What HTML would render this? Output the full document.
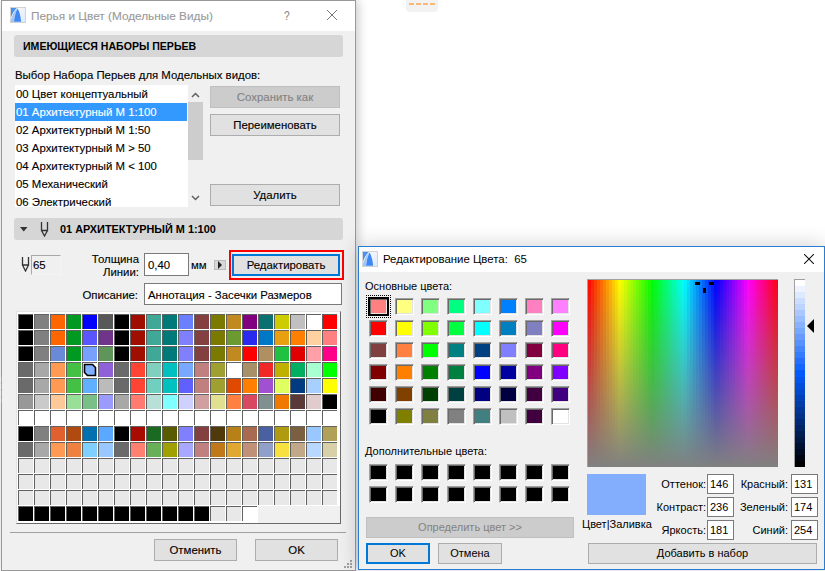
<!DOCTYPE html>
<html><head><meta charset="utf-8">
<style>
*{margin:0;padding:0;box-sizing:border-box}
html,body{width:825px;height:571px;overflow:hidden;background:#fff;position:relative;font-family:"Liberation Sans",sans-serif;font-size:11.4px;color:#000}
.a{position:absolute;white-space:nowrap}
.t{position:absolute;white-space:nowrap;line-height:14px}
#d1{position:absolute;left:0;top:0;width:357px;height:580px;-webkit-text-stroke:0.12px currentColor}
#d1bg{position:absolute;left:1px;top:0;width:355px;height:571px;background:#f0f0f0;border:1px solid #999;box-shadow:2px 0 10px rgba(0,0,0,0.22)}
#d1 .title{position:absolute;left:2px;top:1px;width:353px;height:30px;background:#fff}
.hdr{position:absolute;background:#d6d6d6;border-radius:3px}
.btn{position:absolute;background:#e1e1e1;border:1px solid #adadad;text-align:center}
.btn.dis{background:#cccccc;border-color:#bfbfbf;color:#838383}
.edit{position:absolute;background:#fff;border:1px solid #7a7a7a}
#pg i{position:absolute;width:15px;height:15px;border-top:1px solid #626262;border-left:1px solid #626262}
#pg i.nb{border:none;width:16px;height:16px}
#d2{position:absolute;left:358px;top:246px;width:467px;height:324px;background:#f0f0f0;border:1px solid #2b7cd3;box-shadow:0 0 20px rgba(0,0,0,0.2);font-size:11px}
#d2 .title{position:absolute;left:0;top:0;width:465px;height:25px;background:#fff}
#sw b{position:absolute;width:19px;height:17px;border:1px solid;border-color:#a0a0a0 #fff #fff #a0a0a0;box-shadow:inset 1px 1px 0 #696969, inset -1px -1px 0 #e3e3e3}
.btn2{position:absolute;background:#e1e1e1;border:1px solid #adadad;text-align:center;font-size:11px}
.edit2{position:absolute;background:#fff;border:1px solid #7a7a7a;font-size:11px}
</style></head><body>

<!-- top decoration -->
<div class="a" style="left:406px;top:-4px;width:32px;height:16px;background:#f2f2f2;border-radius:4px"></div>
<div class="a" style="left:409px;top:3px;width:26px;height:2px;background:repeating-linear-gradient(90deg,#f9b878 0 5px,transparent 5px 7px)"></div>

<div id="d1">
  <div id="d1bg"></div>
  <div class="a" style="left:1px;top:377px;width:1px;height:26px;background:repeating-linear-gradient(180deg,#c9a47c 0 5px,transparent 5px 7px)"></div>
  <div class="title"></div>
  <!-- icon -->
  <svg class="a" style="left:10px;top:7px" width="16" height="16" viewBox="0 0 16 16">
    <defs><linearGradient id="ig1" x1="0" y1="0" x2="1" y2="1"><stop offset="0" stop-color="#ffffff"/><stop offset="1" stop-color="#dde8f8"/></linearGradient></defs>
    <rect x="0.5" y="0.5" width="15" height="15" fill="url(#ig1)" stroke="#d2d2d2"/>
    <path d="M1 1 H7 Q3 5 1 11 Z" fill="#4b8ff2"/>
    <path d="M1 15 L1 12 Q3 5 7.2 1.2 Q4.5 7 4 15 Z" fill="#a3c6f7"/>
    <path d="M4 14.8 Q5 6 7.5 1.5 Q10 5 11.2 14.8 Z" fill="#3e88f6"/>
    <path d="M1 11.5 Q3 5 7 1" stroke="#fff" stroke-width="0.9" stroke-dasharray="1.2 0.8" fill="none"/>
  </svg>
  <div class="t" style="left:31px;top:9px;color:#9a9a9a;font-size:11.8px">Перья и Цвет (Модельные Виды)</div>
  <div class="t" style="left:284px;top:9px;color:#8a8a8a;font-size:12px;transform:scaleX(0.85);transform-origin:left">?</div>
  <svg class="a" style="left:326px;top:9px" width="12" height="12" viewBox="0 0 12 12"><path d="M1 1 L11 11 M11 1 L1 11" stroke="#777" stroke-width="1"/></svg>

  <div class="hdr" style="left:14px;top:35px;width:329px;height:22px"></div>
  <div class="t" style="left:23px;top:39px;font-weight:bold;font-size:11px;-webkit-text-stroke:0;transform:scaleX(0.96);transform-origin:left">ИМЕЮЩИЕСЯ НАБОРЫ ПЕРЬЕВ</div>

  <div class="t" style="left:15px;top:68px">Выбор Набора Перьев для Модельных видов:</div>

  <!-- listbox -->
  <div class="a" style="left:15px;top:85px;width:188px;height:122px;background:#fff;overflow:hidden">
    <div class="a" style="left:0;top:18px;width:172px;height:18px;background:#3399ff"></div>
    <div class="t" style="left:1px;top:2px">00 Цвет концептуальный</div>
    <div class="t" style="left:1px;top:20px;color:#fff">01 Архитектурный М 1:100</div>
    <div class="t" style="left:1px;top:38px">02 Архитектурный М 1:50</div>
    <div class="t" style="left:1px;top:56px">03 Архитектурный М &gt; 50</div>
    <div class="t" style="left:1px;top:74px">04 Архитектурный М &lt; 100</div>
    <div class="t" style="left:1px;top:92px">05 Механический</div>
    <div class="t" style="left:1px;top:110px">06 Электрический</div>
    <div class="a" style="left:173px;top:0;width:15px;height:122px;background:#f0f0f0"></div>
    <div class="a" style="left:173px;top:17px;width:15px;height:58px;background:#cdcdcd"></div>
    <svg class="a" style="left:176px;top:7px" width="9" height="6" viewBox="0 0 9 6"><path d="M1 5 L4.5 1.5 L8 5" stroke="#606060" stroke-width="1.5" fill="none"/></svg>
    <svg class="a" style="left:176px;top:110px" width="9" height="6" viewBox="0 0 9 6"><path d="M1 1 L4.5 4.5 L8 1" stroke="#606060" stroke-width="1.5" fill="none"/></svg>
  </div>

  <div class="btn dis" style="left:210px;top:86px;width:130px;height:22px;line-height:20px">Сохранить как</div>
  <div class="btn" style="left:210px;top:114px;width:130px;height:22px;line-height:20px">Переименовать</div>
  <div class="btn" style="left:210px;top:184px;width:130px;height:22px;line-height:20px">Удалить</div>

  <div class="hdr" style="left:14px;top:218px;width:329px;height:22px"></div>
  <svg class="a" style="left:20px;top:227px" width="8" height="5" viewBox="0 0 8 5"><path d="M0 0 L7.5 0 L3.75 4.5 Z" fill="#333"/></svg>
  <svg class="a" style="left:40px;top:222px" width="9" height="15" viewBox="0 0 9 15"><path d="M1.5 0 V8.5 H7.5 V0 M1.5 8.5 L4.5 14 L7.5 8.5" stroke="#333" stroke-width="1.3" fill="none"/></svg>
  <div class="t" style="left:60px;top:222px;font-weight:bold;font-size:11px;-webkit-text-stroke:0;transform:scaleX(0.99);transform-origin:left">01 АРХИТЕКТУРНЫЙ М 1:100</div>

  <svg class="a" style="left:21px;top:257px" width="9" height="15" viewBox="0 0 9 15"><path d="M1.5 0 V8 H7.5 V0 M1.5 8 L4.5 14 L7.5 8" stroke="#333" stroke-width="1.3" fill="none"/></svg>
  <div class="a" style="left:31px;top:255px;width:30px;height:20px;border:1px solid;border-color:#a8a8a8 #f4f4f4 #f4f4f4 #a8a8a8;background:#f0f0f0"></div>
  <div class="t" style="left:33px;top:258px">65</div>

  <div class="t" style="left:80px;top:252px;text-align:right;width:59px">Толщина</div>
  <div class="t" style="left:80px;top:265px;text-align:right;width:59px">Линии:</div>
  <div class="edit" style="left:144px;top:253px;width:45px;height:23px"></div>
  <div class="t" style="left:148px;top:258px">0,40</div>
  <div class="t" style="left:191px;top:258px">мм</div>
  <div class="a" style="left:214px;top:260px;width:12px;height:10px;background:#d8d8d8;border:1px solid #bbb"></div>
  <svg class="a" style="left:217px;top:261px" width="6" height="8" viewBox="0 0 6 8"><path d="M1 0 L5 4 L1 8 Z" fill="#222"/></svg>

  <div class="a" style="left:229px;top:250px;width:115px;height:30px;border:2px solid #ff0000"></div>
  <div class="btn" style="left:232px;top:254px;width:108px;height:22px;line-height:18px;border:2px solid #0078d7">Редактировать</div>

  <div class="t" style="left:40px;top:288px;text-align:right;width:98px">Описание:</div>
  <div class="edit" style="left:144px;top:283px;width:198px;height:22px"></div>
  <div class="t" style="left:148px;top:288px">Аннотация - Засечки Размеров</div>

  <!-- pen grid box -->
  <div class="a" style="left:16px;top:311px;width:325px;height:213px;background:#f0f0f0;border-top:1px solid #e3e3e3;border-left:1px solid #e3e3e3;border-right:1px solid #696969;border-bottom:1px solid #696969"></div>
  <div class="a" style="left:17px;top:312px;width:323px;height:194px;background:#fff"></div>
  <div class="a" style="left:17px;top:312px;width:241px;height:211px;background:#fff"></div>
  <div id="pg" style="position:absolute;left:0;top:0">
<i style="left:18px;top:314px;background:#000000"></i>
<i style="left:34px;top:314px;background:#808080"></i>
<i style="left:50px;top:314px;background:#ff6600"></i>
<i style="left:66px;top:314px;background:#009922"></i>
<i style="left:82px;top:314px;background:#0000ff"></i>
<i style="left:98px;top:314px;background:#585858"></i>
<i style="left:114px;top:314px;background:#000000"></i>
<i style="left:130px;top:314px;background:#a00e00"></i>
<i style="left:146px;top:314px;background:#3fa896"></i>
<i style="left:162px;top:314px;background:#007a78"></i>
<i style="left:178px;top:314px;background:#6a80ff"></i>
<i style="left:194px;top:314px;background:#844040"></i>
<i style="left:210px;top:314px;background:#7a7a00"></i>
<i style="left:226px;top:314px;background:#c08a20"></i>
<i style="left:242px;top:314px;background:#800080"></i>
<i style="left:258px;top:314px;background:#0a7070"></i>
<i style="left:274px;top:314px;background:#cccc00"></i>
<i style="left:290px;top:314px;background:#c0c0c0"></i>
<i style="left:306px;top:314px;background:#ffffff"></i>
<i style="left:322px;top:314px;background:#ff0000"></i>
<i style="left:18px;top:330px;background:#000000"></i>
<i style="left:34px;top:330px;background:#808080"></i>
<i style="left:50px;top:330px;background:#ff6600"></i>
<i style="left:66px;top:330px;background:#009922"></i>
<i style="left:82px;top:330px;background:#5a55ff"></i>
<i style="left:98px;top:330px;background:#70358a"></i>
<i style="left:114px;top:330px;background:#000000"></i>
<i style="left:130px;top:330px;background:#a00e00"></i>
<i style="left:146px;top:330px;background:#3fa896"></i>
<i style="left:162px;top:330px;background:#007a78"></i>
<i style="left:178px;top:330px;background:#8080ff"></i>
<i style="left:194px;top:330px;background:#844040"></i>
<i style="left:210px;top:330px;background:#7a7a00"></i>
<i style="left:226px;top:330px;background:#6a9a30"></i>
<i style="left:242px;top:330px;background:#2a2aee"></i>
<i style="left:258px;top:330px;background:#0078c8"></i>
<i style="left:274px;top:330px;background:#e8a010"></i>
<i style="left:290px;top:330px;background:#ff8000"></i>
<i style="left:306px;top:330px;background:#ffd0a0"></i>
<i style="left:322px;top:330px;background:#ff8080"></i>
<i style="left:18px;top:346px;background:#000000"></i>
<i style="left:34px;top:346px;background:#808080"></i>
<i style="left:50px;top:346px;background:#6a8ad8"></i>
<i style="left:66px;top:346px;background:#009922"></i>
<i style="left:82px;top:346px;background:#78a0ff"></i>
<i style="left:98px;top:346px;background:#5f9558"></i>
<i style="left:114px;top:346px;background:#000000"></i>
<i style="left:130px;top:346px;background:#a00e00"></i>
<i style="left:146px;top:346px;background:#3fa896"></i>
<i style="left:162px;top:346px;background:#007a78"></i>
<i style="left:178px;top:346px;background:#8080ff"></i>
<i style="left:194px;top:346px;background:#844040"></i>
<i style="left:210px;top:346px;background:#7a7a00"></i>
<i style="left:226px;top:346px;background:#c08a20"></i>
<i style="left:242px;top:346px;background:#ff0000"></i>
<i style="left:258px;top:346px;background:#b09060"></i>
<i style="left:274px;top:346px;background:#20c040"></i>
<i style="left:290px;top:346px;background:#e00000"></i>
<i style="left:306px;top:346px;background:#ffa0a8"></i>
<i style="left:322px;top:346px;background:#ff0088"></i>
<i style="left:18px;top:362px;background:#6a6a6a"></i>
<i style="left:34px;top:362px;background:#a8a8a8"></i>
<i style="left:50px;top:362px;background:#ff9a55"></i>
<i style="left:66px;top:362px;background:#44c044"></i>
<i style="left:82px;top:362px;background:#ffffff"></i>
<i style="left:98px;top:362px;background:#9060d8"></i>
<i style="left:114px;top:362px;background:#6a6a6a"></i>
<i style="left:130px;top:362px;background:#ff4433"></i>
<i style="left:146px;top:362px;background:#80cfbf"></i>
<i style="left:162px;top:362px;background:#00c0c0"></i>
<i style="left:178px;top:362px;background:#78a8ff"></i>
<i style="left:194px;top:362px;background:#c08080"></i>
<i style="left:210px;top:362px;background:#a0a030"></i>
<i style="left:226px;top:362px;background:#ffffff"></i>
<i style="left:242px;top:362px;background:#a89068"></i>
<i style="left:258px;top:362px;background:#f02828"></i>
<i style="left:274px;top:362px;background:#c0b000"></i>
<i style="left:290px;top:362px;background:#00b060"></i>
<i style="left:306px;top:362px;background:#a8ffd0"></i>
<i style="left:322px;top:362px;background:#00ff00"></i>
<i style="left:18px;top:378px;background:#6a6a6a"></i>
<i style="left:34px;top:378px;background:#a8a8a8"></i>
<i style="left:50px;top:378px;background:#ff9a55"></i>
<i style="left:66px;top:378px;background:#44c044"></i>
<i style="left:82px;top:378px;background:#60b0ff"></i>
<i style="left:98px;top:378px;background:#bbbbbb"></i>
<i style="left:114px;top:378px;background:#6a6a6a"></i>
<i style="left:130px;top:378px;background:#ff4433"></i>
<i style="left:146px;top:378px;background:#70d0c0"></i>
<i style="left:162px;top:378px;background:#00c0c0"></i>
<i style="left:178px;top:378px;background:#6060ff"></i>
<i style="left:194px;top:378px;background:#c08080"></i>
<i style="left:210px;top:378px;background:#a0a030"></i>
<i style="left:226px;top:378px;background:#e04a00"></i>
<i style="left:242px;top:378px;background:#ff8000"></i>
<i style="left:258px;top:378px;background:#a050d0"></i>
<i style="left:274px;top:378px;background:#e0ff60"></i>
<i style="left:290px;top:378px;background:#003a80"></i>
<i style="left:306px;top:378px;background:#a8d0ff"></i>
<i style="left:322px;top:378px;background:#ffff00"></i>
<i style="left:18px;top:394px;background:#989898"></i>
<i style="left:34px;top:394px;background:#cacaca"></i>
<i style="left:50px;top:394px;background:#ffc898"></i>
<i style="left:66px;top:394px;background:#98e098"></i>
<i style="left:82px;top:394px;background:#78c088"></i>
<i style="left:98px;top:394px;background:#9a9aff"></i>
<i style="left:114px;top:394px;background:#a8a8a8"></i>
<i style="left:130px;top:394px;background:#ff7a70"></i>
<i style="left:146px;top:394px;background:#b8e0d8"></i>
<i style="left:162px;top:394px;background:#80ffff"></i>
<i style="left:178px;top:394px;background:#d0d0ff"></i>
<i style="left:194px;top:394px;background:#d0a0a0"></i>
<i style="left:210px;top:394px;background:#e0e090"></i>
<i style="left:226px;top:394px;background:#ff8040"></i>
<i style="left:242px;top:394px;background:#d84860"></i>
<i style="left:258px;top:394px;background:#809090"></i>
<i style="left:274px;top:394px;background:#f07a00"></i>
<i style="left:290px;top:394px;background:#5a3a38"></i>
<i style="left:306px;top:394px;background:#e0cccc"></i>
<i style="left:322px;top:394px;background:#000000"></i>
<i style="left:18px;top:410px;background:#ffffff"></i>
<i style="left:34px;top:410px;background:#ffffff"></i>
<i style="left:50px;top:410px;background:#ffffff"></i>
<i style="left:66px;top:410px;background:#ffffff"></i>
<i style="left:82px;top:410px;background:#ffffff"></i>
<i style="left:98px;top:410px;background:#ffffff"></i>
<i style="left:114px;top:410px;background:#ffffff"></i>
<i style="left:130px;top:410px;background:#ffffff"></i>
<i style="left:146px;top:410px;background:#ffffff"></i>
<i style="left:162px;top:410px;background:#ffffff"></i>
<i style="left:178px;top:410px;background:#ffffff"></i>
<i style="left:194px;top:410px;background:#ffffff"></i>
<i style="left:210px;top:410px;background:#ffffff"></i>
<i style="left:226px;top:410px;background:#ffffff"></i>
<i style="left:242px;top:410px;background:#ffffff"></i>
<i style="left:258px;top:410px;background:#ffffff"></i>
<i style="left:274px;top:410px;background:#ffffff"></i>
<i style="left:290px;top:410px;background:#ffffff"></i>
<i style="left:306px;top:410px;background:#ffffff"></i>
<i style="left:322px;top:410px;background:#ffffff"></i>
<i style="left:18px;top:426px;background:#000000"></i>
<i style="left:34px;top:426px;background:#808080"></i>
<i style="left:50px;top:426px;background:#e06030"></i>
<i style="left:66px;top:426px;background:#b04a10"></i>
<i style="left:82px;top:426px;background:#0070b0"></i>
<i style="left:98px;top:426px;background:#5aa8ff"></i>
<i style="left:114px;top:426px;background:#000000"></i>
<i style="left:130px;top:426px;background:#a80c00"></i>
<i style="left:146px;top:426px;background:#1a6a22"></i>
<i style="left:162px;top:426px;background:#5a5a00"></i>
<i style="left:178px;top:426px;background:#8080ff"></i>
<i style="left:194px;top:426px;background:#844040"></i>
<i style="left:210px;top:426px;background:#503a0c"></i>
<i style="left:226px;top:426px;background:#b88018"></i>
<i style="left:242px;top:426px;background:#a86a50"></i>
<i style="left:258px;top:426px;background:#4a60a0"></i>
<i style="left:274px;top:426px;background:#b09a10"></i>
<i style="left:290px;top:426px;background:#7a6040"></i>
<i style="left:306px;top:426px;background:#98c8ff"></i>
<i style="left:322px;top:426px;background:#b0a058"></i>
<i style="left:18px;top:442px;background:#6a6a6a"></i>
<i style="left:34px;top:442px;background:#a8a8a8"></i>
<i style="left:50px;top:442px;background:#ff9a55"></i>
<i style="left:66px;top:442px;background:#f08040"></i>
<i style="left:82px;top:442px;background:#80d0ff"></i>
<i style="left:98px;top:442px;background:#98c8ff"></i>
<i style="left:114px;top:442px;background:#6a6a6a"></i>
<i style="left:130px;top:442px;background:#ff8070"></i>
<i style="left:146px;top:442px;background:#68b058"></i>
<i style="left:162px;top:442px;background:#a0a000"></i>
<i style="left:178px;top:442px;background:#a8a8ff"></i>
<i style="left:194px;top:442px;background:#c08080"></i>
<i style="left:210px;top:442px;background:#c07818"></i>
<i style="left:226px;top:442px;background:#e0a830"></i>
<i style="left:242px;top:442px;background:#c09078"></i>
<i style="left:258px;top:442px;background:#90a0c8"></i>
<i style="left:274px;top:442px;background:#f8e040"></i>
<i style="left:290px;top:442px;background:#c0a888"></i>
<i style="left:306px;top:442px;background:#b8d8ff"></i>
<i style="left:322px;top:442px;background:#d8d0a8"></i>
<i style="left:18px;top:458px;background:#e8e8e8"></i>
<i style="left:34px;top:458px;background:#e8e8e8"></i>
<i style="left:50px;top:458px;background:#e8e8e8"></i>
<i style="left:66px;top:458px;background:#e8e8e8"></i>
<i style="left:82px;top:458px;background:#e8e8e8"></i>
<i style="left:98px;top:458px;background:#e8e8e8"></i>
<i style="left:114px;top:458px;background:#e8e8e8"></i>
<i style="left:130px;top:458px;background:#e8e8e8"></i>
<i style="left:146px;top:458px;background:#e8e8e8"></i>
<i style="left:162px;top:458px;background:#e8e8e8"></i>
<i style="left:178px;top:458px;background:#e8e8e8"></i>
<i style="left:194px;top:458px;background:#e8e8e8"></i>
<i style="left:210px;top:458px;background:#e8e8e8"></i>
<i style="left:226px;top:458px;background:#e8e8e8"></i>
<i style="left:242px;top:458px;background:#e8e8e8"></i>
<i style="left:258px;top:458px;background:#e8e8e8"></i>
<i style="left:274px;top:458px;background:#e8e8e8"></i>
<i style="left:290px;top:458px;background:#e8e8e8"></i>
<i style="left:306px;top:458px;background:#e8e8e8"></i>
<i style="left:322px;top:458px;background:#e8e8e8"></i>
<i style="left:18px;top:474px;background:#e8e8e8"></i>
<i style="left:34px;top:474px;background:#e8e8e8"></i>
<i style="left:50px;top:474px;background:#e8e8e8"></i>
<i style="left:66px;top:474px;background:#e8e8e8"></i>
<i style="left:82px;top:474px;background:#e8e8e8"></i>
<i style="left:98px;top:474px;background:#e8e8e8"></i>
<i style="left:114px;top:474px;background:#e8e8e8"></i>
<i style="left:130px;top:474px;background:#e8e8e8"></i>
<i style="left:146px;top:474px;background:#e8e8e8"></i>
<i style="left:162px;top:474px;background:#e8e8e8"></i>
<i style="left:178px;top:474px;background:#e8e8e8"></i>
<i style="left:194px;top:474px;background:#e8e8e8"></i>
<i style="left:210px;top:474px;background:#e8e8e8"></i>
<i style="left:226px;top:474px;background:#e8e8e8"></i>
<i style="left:242px;top:474px;background:#e8e8e8"></i>
<i style="left:258px;top:474px;background:#e8e8e8"></i>
<i style="left:274px;top:474px;background:#e8e8e8"></i>
<i style="left:290px;top:474px;background:#e8e8e8"></i>
<i style="left:306px;top:474px;background:#e8e8e8"></i>
<i style="left:322px;top:474px;background:#e8e8e8"></i>
<i style="left:18px;top:490px;background:#e8e8e8"></i>
<i style="left:34px;top:490px;background:#e8e8e8"></i>
<i style="left:50px;top:490px;background:#e8e8e8"></i>
<i style="left:66px;top:490px;background:#e8e8e8"></i>
<i style="left:82px;top:490px;background:#e8e8e8"></i>
<i style="left:98px;top:490px;background:#e8e8e8"></i>
<i style="left:114px;top:490px;background:#e8e8e8"></i>
<i style="left:130px;top:490px;background:#e8e8e8"></i>
<i style="left:146px;top:490px;background:#e8e8e8"></i>
<i style="left:162px;top:490px;background:#e8e8e8"></i>
<i style="left:178px;top:490px;background:#e8e8e8"></i>
<i style="left:194px;top:490px;background:#e8e8e8"></i>
<i style="left:210px;top:490px;background:#e8e8e8"></i>
<i style="left:226px;top:490px;background:#e8e8e8"></i>
<i style="left:242px;top:490px;background:#e8e8e8"></i>
<i style="left:258px;top:490px;background:#e8e8e8"></i>
<i style="left:274px;top:490px;background:#e8e8e8"></i>
<i style="left:290px;top:490px;background:#e8e8e8"></i>
<i style="left:306px;top:490px;background:#e8e8e8"></i>
<i style="left:322px;top:490px;background:#e8e8e8"></i>
<i style="left:18px;top:506px;background:#000000"></i>
<i style="left:34px;top:506px;background:#000000"></i>
<i style="left:50px;top:506px;background:#000000"></i>
<i style="left:66px;top:506px;background:#000000"></i>
<i style="left:82px;top:506px;background:#000000"></i>
<i style="left:98px;top:506px;background:#000000"></i>
<i style="left:114px;top:506px;background:#000000"></i>
<i style="left:130px;top:506px;background:#000000"></i>
<i style="left:146px;top:506px;background:#000000"></i>
<i style="left:162px;top:506px;background:#000000"></i>
<i style="left:178px;top:506px;background:#000000"></i>
<i style="left:194px;top:506px;background:#000000"></i>
<i style="left:210px;top:506px;background:#e8e8e8"></i>
<i style="left:226px;top:506px;background:#e8e8e8"></i>
<i style="left:242px;top:506px;background:#ffffff"></i>
  </div>
  <svg class="a" style="left:83px;top:363px" width="14" height="14" viewBox="0 0 14 14"><path d="M1.5 1.5 H9.5 L12.5 4.5 V12.5 H4.5 L1.5 9.5 Z" fill="#80b0ff" stroke="#000" stroke-width="1.6"/></svg>

  <div class="a" style="left:10px;top:532px;width:336px;height:1px;background:#a0a0a0"></div>
  <div class="btn" style="left:154px;top:539px;width:83px;height:22px;line-height:20px">Отменить</div>
  <div class="btn" style="left:255px;top:539px;width:83px;height:22px;line-height:20px">OK</div>
  <svg class="a" style="left:343px;top:559px" width="10" height="10" viewBox="0 0 10 10" fill="#a0a0a0"><rect x="7" y="1" width="2" height="2"/><rect x="4" y="4" width="2" height="2"/><rect x="7" y="4" width="2" height="2"/><rect x="1" y="7" width="2" height="2"/><rect x="4" y="7" width="2" height="2"/><rect x="7" y="7" width="2" height="2"/></svg>
</div>

<div id="d2">
  <div class="title"></div>
  <svg class="a" style="left:3px;top:4px" width="16" height="16" viewBox="0 0 16 16">
    <defs><linearGradient id="ig2" x1="0" y1="0" x2="1" y2="1"><stop offset="0" stop-color="#ffffff"/><stop offset="1" stop-color="#dde8f8"/></linearGradient></defs>
    <rect x="0.5" y="0.5" width="15" height="15" fill="url(#ig2)" stroke="#d2d2d2"/>
    <path d="M1 1 H7 Q3 5 1 11 Z" fill="#4b8ff2"/>
    <path d="M1 15 L1 12 Q3 5 7.2 1.2 Q4.5 7 4 15 Z" fill="#a3c6f7"/>
    <path d="M4 14.8 Q5 6 7.5 1.5 Q10 5 11.2 14.8 Z" fill="#3e88f6"/>
    <path d="M1 11.5 Q3 5 7 1" stroke="#fff" stroke-width="0.9" stroke-dasharray="1.2 0.8" fill="none"/>
  </svg>
  <div class="t" style="left:24px;top:5px;font-size:11.4px">Редактирование Цвета:&nbsp; 65</div>
  <svg class="a" style="left:445px;top:7px" width="10" height="10" viewBox="0 0 10 10"><path d="M0 0 L10 10 M10 0 L0 10" stroke="#111" stroke-width="1.05"/></svg>

  <div class="t" style="left:6px;top:32px">Основные цвета:</div>
  <div id="sw" style="position:absolute;left:-359px;top:-247px">
<b style="left:369px;top:298px;background:#FF8080"></b>
<b style="left:395px;top:298px;background:#FFFF80"></b>
<b style="left:421px;top:298px;background:#80FF80"></b>
<b style="left:447px;top:298px;background:#00FF80"></b>
<b style="left:473px;top:298px;background:#80FFFF"></b>
<b style="left:499px;top:298px;background:#0080FF"></b>
<b style="left:525px;top:298px;background:#FF80C0"></b>
<b style="left:551px;top:298px;background:#FF80FF"></b>
<b style="left:369px;top:320px;background:#FF0000"></b>
<b style="left:395px;top:320px;background:#FFFF00"></b>
<b style="left:421px;top:320px;background:#80FF00"></b>
<b style="left:447px;top:320px;background:#00FF40"></b>
<b style="left:473px;top:320px;background:#00FFFF"></b>
<b style="left:499px;top:320px;background:#0080C0"></b>
<b style="left:525px;top:320px;background:#8080C0"></b>
<b style="left:551px;top:320px;background:#FF00FF"></b>
<b style="left:369px;top:342px;background:#804040"></b>
<b style="left:395px;top:342px;background:#FF8040"></b>
<b style="left:421px;top:342px;background:#00FF00"></b>
<b style="left:447px;top:342px;background:#008080"></b>
<b style="left:473px;top:342px;background:#004080"></b>
<b style="left:499px;top:342px;background:#8080FF"></b>
<b style="left:525px;top:342px;background:#800040"></b>
<b style="left:551px;top:342px;background:#FF0080"></b>
<b style="left:369px;top:364px;background:#800000"></b>
<b style="left:395px;top:364px;background:#FF8000"></b>
<b style="left:421px;top:364px;background:#008000"></b>
<b style="left:447px;top:364px;background:#008040"></b>
<b style="left:473px;top:364px;background:#0000FF"></b>
<b style="left:499px;top:364px;background:#0000A0"></b>
<b style="left:525px;top:364px;background:#800080"></b>
<b style="left:551px;top:364px;background:#8000FF"></b>
<b style="left:369px;top:386px;background:#400000"></b>
<b style="left:395px;top:386px;background:#804000"></b>
<b style="left:421px;top:386px;background:#004000"></b>
<b style="left:447px;top:386px;background:#004040"></b>
<b style="left:473px;top:386px;background:#000080"></b>
<b style="left:499px;top:386px;background:#000040"></b>
<b style="left:525px;top:386px;background:#400040"></b>
<b style="left:551px;top:386px;background:#400080"></b>
<b style="left:369px;top:408px;background:#000000"></b>
<b style="left:395px;top:408px;background:#808000"></b>
<b style="left:421px;top:408px;background:#808040"></b>
<b style="left:447px;top:408px;background:#808080"></b>
<b style="left:473px;top:408px;background:#408080"></b>
<b style="left:499px;top:408px;background:#C0C0C0"></b>
<b style="left:525px;top:408px;background:#400040"></b>
<b style="left:551px;top:408px;background:#FFFFFF"></b>
<b style="left:369px;top:464px;background:#000"></b>
<b style="left:395px;top:464px;background:#000"></b>
<b style="left:421px;top:464px;background:#000"></b>
<b style="left:447px;top:464px;background:#000"></b>
<b style="left:473px;top:464px;background:#000"></b>
<b style="left:499px;top:464px;background:#000"></b>
<b style="left:525px;top:464px;background:#000"></b>
<b style="left:551px;top:464px;background:#000"></b>
<b style="left:369px;top:486px;background:#000"></b>
<b style="left:395px;top:486px;background:#000"></b>
<b style="left:421px;top:486px;background:#000"></b>
<b style="left:447px;top:486px;background:#000"></b>
<b style="left:473px;top:486px;background:#000"></b>
<b style="left:499px;top:486px;background:#000"></b>
<b style="left:525px;top:486px;background:#000"></b>
<b style="left:551px;top:486px;background:#000"></b>
  </div>
  <div class="a" style="left:7px;top:48px;width:25px;height:23px;border:1px dotted #000"></div>
  <div class="a" style="left:9px;top:50px;width:21px;height:19px;border:2px solid #000"></div>

  <div class="t" style="left:6px;top:197px">Дополнительные цвета:</div>

  <div class="btn2 dis" style="left:7px;top:270px;width:208px;height:21px;line-height:19px;background:#cccccc;border-color:#bfbfbf;color:#838383">Определить цвет &gt;&gt;</div>
  <div class="btn2" style="left:7px;top:296px;width:64px;height:21px;line-height:17px;border:2px solid #0078d7">OK</div>
  <div class="btn2" style="left:79px;top:296px;width:64px;height:21px;line-height:19px">Отмена</div>

  <!-- spectrum -->
  <div class="a" style="left:228px;top:32px;width:191px;height:188px;border-top:1px solid #a0a0a0;border-left:1px solid #a0a0a0;background:#808080"></div>
  <div class="a" style="left:229px;top:33px;width:190px;height:187px;background:linear-gradient(to right,#ff0c00 0px 3px,#ff2400 3px 6px,#ff3c00 6px 9px,#ff5400 9px 12px,#ff6c00 12px 15px,#ff8300 15px 18px,#ff9b00 18px 21px,#ffb300 21px 24px,#ffcb00 24px 27px,#ffe300 27px 30px,#fffb00 30px 33px,#ebff00 33px 36px,#d3ff00 36px 39px,#bbff00 39px 42px,#a3ff00 42px 45px,#8bff00 45px 48px,#74ff00 48px 51px,#5cff00 51px 54px,#44ff00 54px 57px,#2cff00 57px 60px,#14ff00 60px 63px,#00ff04 63px 66px,#00ff1c 66px 69px,#00ff34 69px 72px,#00ff4c 72px 75px,#00ff64 75px 78px,#00ff7c 78px 81px,#00ff93 81px 84px,#00ffab 84px 87px,#00ffc3 87px 90px,#00ffdb 90px 93px,#00fff3 93px 96px,#00f3ff 96px 99px,#00dbff 99px 102px,#00c3ff 102px 105px,#00abff 105px 108px,#0093ff 108px 111px,#007cff 111px 114px,#0064ff 114px 117px,#004cff 117px 120px,#0034ff 120px 123px,#001cff 123px 126px,#0004ff 126px 129px,#1400ff 129px 132px,#2c00ff 132px 135px,#4400ff 135px 138px,#5c00ff 138px 141px,#7400ff 141px 144px,#8b00ff 144px 147px,#a300ff 147px 150px,#bb00ff 150px 153px,#d300ff 153px 156px,#eb00ff 156px 159px,#ff00fb 159px 162px,#ff00e3 162px 165px,#ff00cb 165px 168px,#ff00b3 168px 171px,#ff009b 171px 174px,#ff0083 174px 177px,#ff006c 177px 180px,#ff0054 180px 183px,#ff003c 183px 186px,#ff0024 186px 189px,#ff000c 189px 190px)"></div>
  <div class="a" style="left:229px;top:33px;width:190px;height:187px;background:linear-gradient(to bottom,rgba(128,128,128,0),rgba(128,128,128,1))"></div>
  <svg class="a" style="left:336px;top:35px" width="20" height="12" viewBox="0 0 20 12"><rect x="0" y="0" width="5" height="3" fill="#000"/><rect x="14" y="0" width="5" height="3" fill="#000"/><rect x="8" y="6" width="3" height="5" fill="#000"/></svg>

  <div class="a" style="left:435px;top:32px;width:11px;height:188px;border-top:1px solid #a0a0a0;border-left:1px solid #a0a0a0;background:linear-gradient(to bottom,#ffffff 0px 6px,#eef4ff 6px 12px,#dde9ff 12px 18px,#ccdeff 18px 24px,#bcd3fe 24px 30px,#abc8fe 30px 36px,#9abdfe 36px 42px,#89b2fe 42px 48px,#78a7fe 48px 54px,#679cfe 54px 60px,#5691fe 60px 66px,#4686fd 66px 72px,#357bfd 72px 78px,#2470fd 78px 84px,#1365fd 84px 90px,#025afd 90px 97px,#0254ec 97px 103px,#024edb 103px 109px,#0248ca 109px 115px,#0242b9 115px 121px,#013ca9 121px 127px,#013698 127px 133px,#013087 133px 139px,#012a76 139px 145px,#012465 145px 151px,#011e54 151px 157px,#011843 157px 163px,#001233 163px 169px,#000c22 169px 175px,#000611 175px 181px,#000000 181px 187px)"></div>
  <svg class="a" style="left:447px;top:72px" width="9" height="14" viewBox="0 0 9 14"><path d="M8 0 L1 7 L8 14 Z" fill="#000"/></svg>

  <div class="a" style="left:228px;top:227px;width:59px;height:41px;background:#83aefe"></div>
  <div class="t" style="left:223px;top:270px">Цвет|Заливка</div>

  <div class="t" style="left:280px;top:230px;width:67px;text-align:right">Оттенок:</div>
  <div class="t" style="left:280px;top:253px;width:67px;text-align:right">Контраст:</div>
  <div class="t" style="left:280px;top:276px;width:67px;text-align:right">Яркость:</div>
  <div class="edit2" style="left:348px;top:227px;width:27px;height:20px;line-height:18px;padding-left:2px">146</div>
  <div class="edit2" style="left:348px;top:250px;width:27px;height:20px;line-height:18px;padding-left:2px">236</div>
  <div class="edit2" style="left:348px;top:273px;width:27px;height:20px;line-height:18px;padding-left:2px">181</div>

  <div class="t" style="left:368px;top:230px;width:61px;text-align:right">Красный:</div>
  <div class="t" style="left:368px;top:253px;width:61px;text-align:right">Зеленый:</div>
  <div class="t" style="left:368px;top:276px;width:61px;text-align:right">Синий:</div>
  <div class="edit2" style="left:432px;top:227px;width:27px;height:20px;line-height:18px;padding-left:2px">131</div>
  <div class="edit2" style="left:432px;top:250px;width:27px;height:20px;line-height:18px;padding-left:2px">174</div>
  <div class="edit2" style="left:432px;top:273px;width:27px;height:20px;line-height:18px;padding-left:2px">254</div>

  <div class="btn2" style="left:229px;top:296px;width:229px;height:21px;line-height:19px">Добавить в набор</div>
</div>
</body></html>
